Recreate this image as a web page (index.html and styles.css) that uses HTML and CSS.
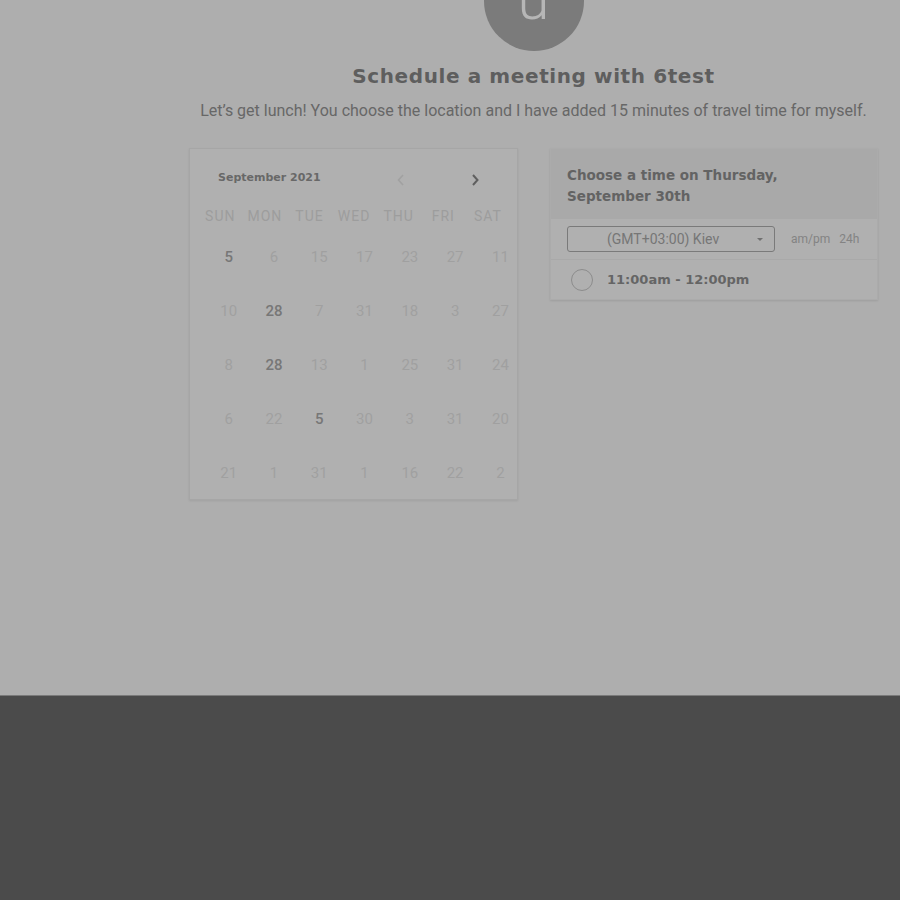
FILE: index.html
```html
<!DOCTYPE html>
<html>
<head>
<meta charset="utf-8">
<link rel="stylesheet" href="styles.css">
</head>
<body>
<div class="page">
  <div class="wrap">
    <div class="avatar"><span class="avatar-letter">u</span></div>
    <h1 class="title">Schedule a meeting with 6test</h1>
    <p class="subtitle">Let’s get lunch! You choose the location and I have added 15 minutes of travel time for myself.</p>
    <div class="panels">
      <div class="calendar">
        <div class="cal-head">
          <span class="month">September 2021</span>
          <span class="arrow arrow-prev"><svg width="10" height="12" viewBox="0 0 10 12"><path d="M7 1 L2.5 6 L7 11" fill="none" stroke="currentColor" stroke-width="1.6"/></svg></span>
          <span class="arrow arrow-next"><svg width="10" height="12" viewBox="0 0 10 12"><path d="M3 1 L7.5 6 L3 11" fill="none" stroke="currentColor" stroke-width="2"/></svg></span>
        </div>
        <div class="dow">
          <span>SUN</span><span>MON</span><span>TUE</span><span>WED</span><span>THU</span><span>FRI</span><span>SAT</span>
        </div>
        <div class="days">
          <span class="on">5</span><span>6</span><span>15</span><span>17</span><span>23</span><span>27</span><span>11</span>
          <span>10</span><span class="on">28</span><span>7</span><span>31</span><span>18</span><span>3</span><span>27</span>
          <span>8</span><span class="on">28</span><span>13</span><span>1</span><span>25</span><span>31</span><span>24</span>
          <span>6</span><span>22</span><span class="on">5</span><span>30</span><span>3</span><span>31</span><span>20</span>
          <span>21</span><span>1</span><span>31</span><span>1</span><span>16</span><span>22</span><span>2</span>
        </div>
      </div>
      <div class="times">
        <div class="times-head">Choose a time on Thursday, September 30th</div>
        <div class="tz-row">
          <div class="tz-select"><span class="tz-text">(GMT+03:00) Kiev</span><span class="caret"></span></div>
          <div class="fmt"><span>am/pm</span><span>24h</span></div>
        </div>
        <div class="slot">
          <span class="radio"></span>
          <span class="slot-text">11:00am - 12:00pm</span>
        </div>
      </div>
    </div>
  </div>
</div>
<div class="footer"></div>
</body>
</html>
```
FILE: styles.css
```css
html, body {
  margin: 0;
  padding: 0;
  background: #4b4b4b;
}
.page {
  height: 695px;
  background: #aeaeae;
  border-bottom: 1px solid #7a7a7a;
  overflow: hidden;
}
.footer {
  height: 204px;
  background: #4b4b4b;
}
.wrap {
  margin-left: 189px;
  width: 689px;
  display: flex;
  flex-direction: column;
  align-items: center;
}
.avatar {
  width: 100px;
  height: 100px;
  margin-top: -49px;
  border-radius: 50%;
  background: #7b7b7b;
  display: flex;
  justify-content: center;
}
.avatar-letter {
  display: block;
  font-family: Roboto, sans-serif;
  font-weight: 300;
  font-size: 58px;
  line-height: 58px;
  padding-top: 19px;
  color: #b6b6b6;
}
.title {
  margin: 12px 0 0;
  font-family: "DejaVu Sans", sans-serif;
  font-weight: 700;
  font-size: 20px;
  letter-spacing: 0.6px;
  line-height: 26px;
  color: #5e5e5e;
}
.subtitle {
  margin: 11px 0 0;
  font-family: Roboto, sans-serif;
  font-size: 16px;
  line-height: 22px;
  color: #676767;
  white-space: nowrap;
}
.panels {
  align-self: stretch;
  display: flex;
  gap: 32px;
  margin-top: 26px;
  align-items: flex-start;
}
.calendar {
  width: 327px;
  height: 350px;
  border: 1px solid #a6a6a6;
  background: #b0b0b0;
  box-shadow: 0 1px 2px rgba(0,0,0,0.08);
}
.cal-head {
  display: flex;
  align-items: center;
  height: 20px;
  margin-top: 18px;
  padding-left: 28px;
}
.month {
  font-family: "DejaVu Sans", sans-serif;
  font-size: 11px;
  font-weight: 700;
  color: #686868;
  width: 178px;
}
.arrow {
  display: flex;
  align-items: center;
  margin-top: 5px;
}
.arrow-prev {
  color: #a1a1a1;
}
.arrow-next {
  margin-left: 64px;
  color: #5f5f5f;
}
.dow {
  display: grid;
  grid-template-columns: repeat(7, 44.6px);
  margin-top: 20px;
  margin-left: 8px;
  font-family: Roboto, sans-serif;
  font-size: 14px;
  letter-spacing: 1px;
  line-height: 18px;
  color: #9d9d9d;
  text-align: center;
}
.days {
  display: grid;
  grid-template-columns: repeat(7, 45.3px);
  grid-auto-rows: 54px;
  margin-left: 16px;
  margin-top: 22px;
  font-family: Roboto, sans-serif;
  font-size: 15px;
  color: #a0a0a0;
  text-align: center;
  line-height: 20px;
}
.days span.on {
  color: #777;
  font-weight: 500;
}
.times {
  width: 328px;
  background: #b0b0b0;
  box-shadow: 0 1px 2px rgba(0,0,0,0.1);
  border: 1px solid #ababab;
  box-sizing: border-box;
}
.times-head {
  background: #a9a9a9;
  height: 70px;
  box-sizing: border-box;
  padding: 16px 60px 0 16px;
  font-family: "DejaVu Sans", sans-serif;
  font-weight: 700;
  font-size: 13.5px;
  line-height: 21px;
  color: #636363;
}
.tz-row {
  display: flex;
  align-items: center;
  height: 40px;
  padding-left: 16px;
  border-bottom: 1px solid #a9a9a9;
}
.tz-select {
  width: 208px;
  height: 26px;
  box-sizing: border-box;
  border: 1px solid #7a7a7a;
  border-radius: 3px;
  display: flex;
  align-items: center;
  position: relative;
  font-family: Roboto, sans-serif;
  font-size: 14px;
  color: #767676;
}
.tz-text {
  margin-left: 39px;
}
.caret {
  position: absolute;
  right: 11px;
  top: 11px;
  width: 0;
  height: 0;
  border-left: 3px solid transparent;
  border-right: 3px solid transparent;
  border-top: 3px solid #707070;
}
.fmt {
  display: flex;
  gap: 9px;
  margin-left: 16px;
  font-family: Roboto, sans-serif;
  font-size: 12px;
  color: #838383;
}
.slot {
  display: flex;
  align-items: center;
  height: 39px;
  padding-left: 20px;
}
.radio {
  width: 20px;
  height: 20px;
  border: 1.5px solid #8c8c8c;
  border-radius: 50%;
}
.slot-text {
  margin-left: 14px;
  font-family: "DejaVu Sans", sans-serif;
  font-weight: 700;
  font-size: 13px;
  color: #656565;
}
```
